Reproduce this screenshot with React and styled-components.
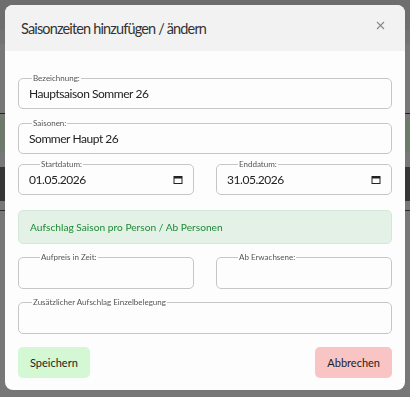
import React from "react"
import styled, { createGlobalStyle } from "styled-components"

const GlobalStyle = createGlobalStyle`
  html, body {
    margin: 0;
    padding: 0;
    background: #777;
    font-family: Lato, "Open Sans", sans-serif;
  }
  * {
    box-sizing: border-box;
  }
`

const Page = styled.div`
  width: 410px;
  height: 397px;
  overflow: hidden;
  display: flex;
  flex-direction: column;
  background: #777;
`

const Band = styled.div`
  height: ${p => p.h}px;
  flex: none;
  background: ${p => p.bg || "#777"};
  border-bottom: ${p => (p.line ? `1px solid ${p.line}` : "none")};
`

const Overlay = styled.div`
  position: fixed;
  inset: 0;
  padding: 5px;
  display: flex;
  justify-content: center;
  align-items: flex-start;
`

const Modal = styled.div`
  width: 400px;
  height: 385px;
  background: #fdfdfd;
  border-radius: 8px;
  overflow: hidden;
  display: flex;
  flex-direction: column;
`

const Header = styled.div`
  height: 46px;
  flex: none;
  background: #f2f2f2;
  display: flex;
  align-items: center;
  justify-content: space-between;
  padding: 0 19px 0 16px;
`

const Title = styled.h5`
  margin: 0;
  font-size: 14.5px;
  letter-spacing: -0.85px;
  font-weight: 400;
  color: #333;
`

const Close = styled.button`
  border: none;
  background: transparent;
  padding: 0;
  width: 12px;
  height: 12px;
  display: flex;
  align-items: center;
  justify-content: center;
  cursor: pointer;
  margin-bottom: 5px;
`

const Body = styled.div`
  flex: 1;
  display: flex;
  flex-direction: column;
  padding: 22px 13px 12px;
`

const Row = styled.div`
  display: grid;
  grid-template-columns: 1fr 1fr;
  gap: 22px;
  margin-top: ${p => p.mt || 0}px;
`

const Field = styled.fieldset`
  margin: 0;
  margin-top: ${p => p.mt || 0}px;
  padding: 0 10px;
  border: 1px solid #c6c6c6;
  border-radius: 5px;
  min-width: 0;
  display: flex;
  align-items: center;
`

const Legend = styled.legend`
  font-size: 8px;
  line-height: 10px;
  color: #555;
  padding: 0 1px;
  margin-left: ${p => p.offset}px;
`

const Input = styled.input`
  flex: 1;
  min-width: 0;
  border: none;
  outline: none;
  background: transparent;
  font-family: inherit;
  font-size: 12px;
  letter-spacing: -0.45px;
  color: #222;
  height: ${p => p.h || 25}px;
  padding: 0 0 4px;
`

const CalIcon = styled.svg`
  flex: none;
  margin-bottom: 4px;
`

const Alert = styled.div`
  margin-top: 15px;
  height: 34px;
  display: flex;
  align-items: center;
  padding: 0 11px;
  background: #e3f1e6;
  border: 1px solid #d3e8d8;
  border-radius: 5px;
  color: #1f8a36;
  font-size: 10.2px;
`

const Footer = styled.div`
  margin-top: auto;
  display: flex;
  justify-content: space-between;
`

const Button = styled.button`
  height: 31px;
  padding: 0 12px;
  border: none;
  border-radius: 5px;
  font-family: inherit;
  font-size: 11px;
  color: #222;
  background: ${p => (p.variant === "cancel" ? "#f9c4c4" : "#d3f8d3")};
  cursor: pointer;
`

const Calendar = () => (
  <CalIcon width="10" height="10" viewBox="0 0 10 10">
    <rect x="1" y="1.5" width="8" height="7" fill="none" stroke="#222" strokeWidth="1" />
    <rect x="1" y="1.5" width="8" height="2" fill="#222" />
  </CalIcon>
)

const TextField = ({ label, value, offset = 3, mt, h, date }) => (
  <Field mt={mt}>
    <Legend offset={offset}>{label}</Legend>
    <Input defaultValue={value} h={h} />
    {date && <Calendar />}
  </Field>
)

export default function App() {
  return (
    <>
      <GlobalStyle />
      <Page>
        <Band h={30} bg="#6e6e6e" />
        <Band h={14} bg="#727272" />
        <Band h={70} line="#222" />
        <Band h={4} />
        <Band h={34} bg="#6b7a6b" />
        <Band h={15} />
        <Band h={34} bg="#353535" />
        <Band h={10} line="#2a2a2a" />
      </Page>
      <Overlay>
        <Modal>
          <Header>
            <Title>Saisonzeiten hinzufügen / ändern</Title>
            <Close aria-label="Schließen">
              <svg width="9" height="9" viewBox="0 0 9 9">
                <path d="M1 1 L8 8 M8 1 L1 8" stroke="#888" strokeWidth="1.1" />
              </svg>
            </Close>
          </Header>
          <Body>
            <TextField label="Bezeichnung:" value="Hauptsaison Sommer 26" />
            <TextField label="Saisonen:" value="Sommer Haupt 26" mt={9} />
            <Row mt={5}>
              <TextField label="Startdatum:" value="01.05.2026" offset={11} date />
              <TextField label="Enddatum:" value="31.05.2026" offset={11} date />
            </Row>
            <Alert>Aufschlag Saison pro Person / Ab Personen</Alert>
            <Row mt={8}>
              <TextField label="Aufpreis in Zeit:" value="" offset={11} h={26} />
              <TextField label="Ab Erwachsene:" value="" offset={11} h={26} />
            </Row>
            <TextField label="Zusätzlicher Aufschlag Einzelbelegung" value="" offset={3} mt={8} h={26} />
            <Footer>
              <Button>Speichern</Button>
              <Button variant="cancel">Abbrechen</Button>
            </Footer>
          </Body>
        </Modal>
      </Overlay>
    </>
  )
}
